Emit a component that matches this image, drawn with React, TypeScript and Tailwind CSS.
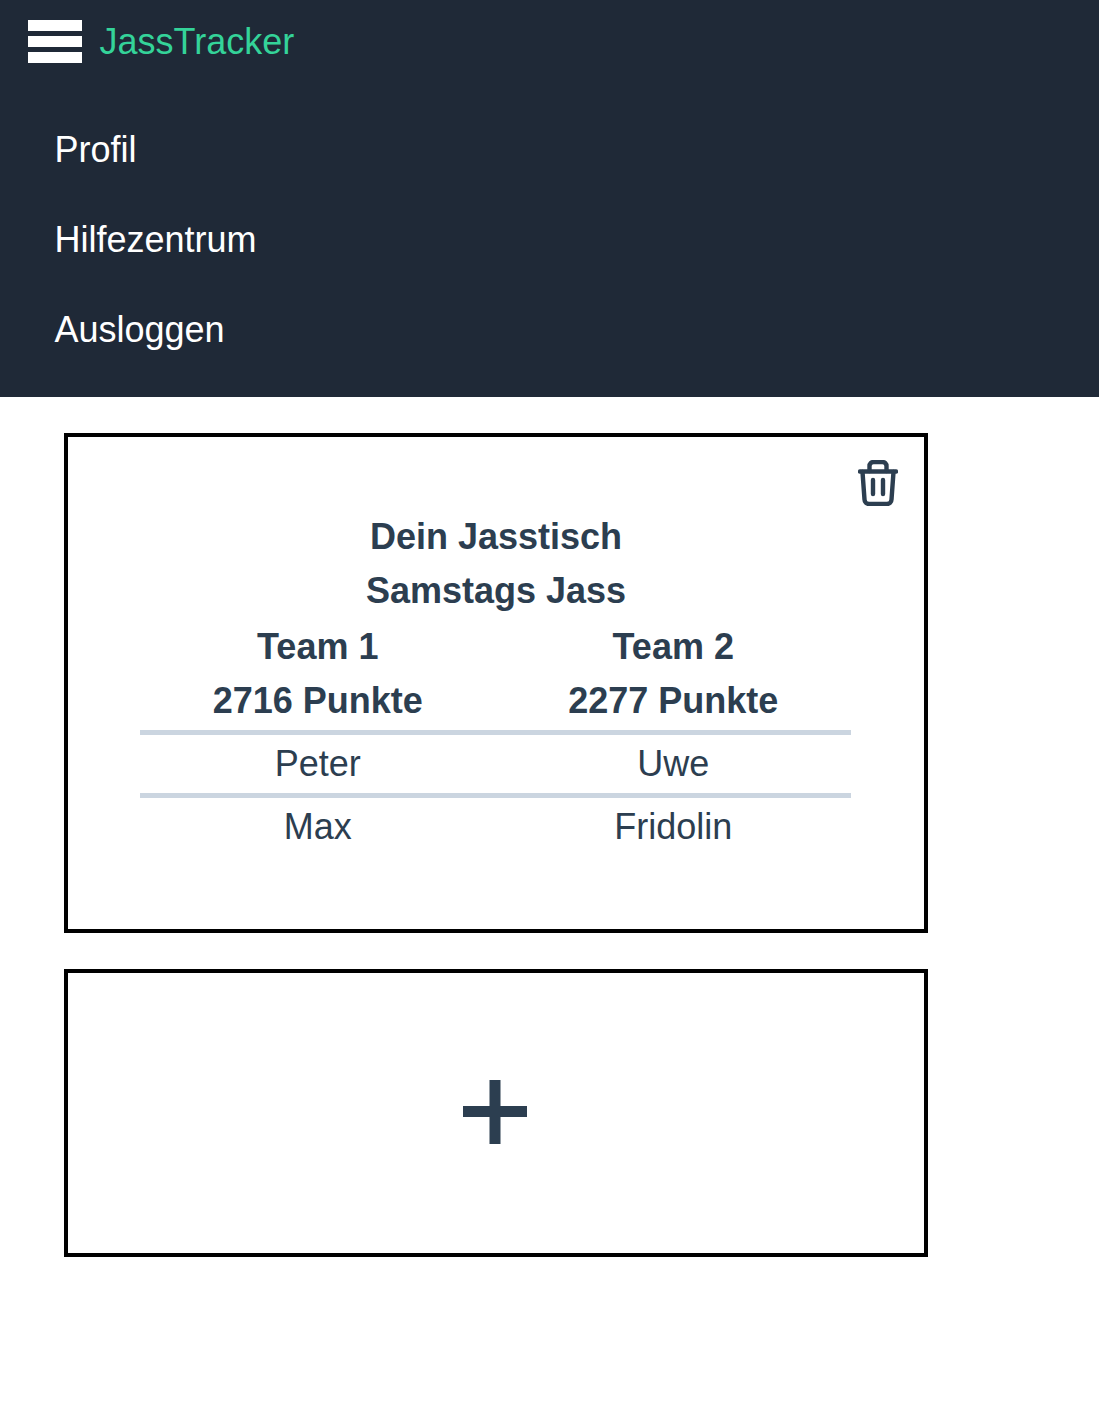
const navLinks = ["Profil", "Hilfezentrum", "Ausloggen"];

const rows = [
  ["Peter", "Uwe"],
  ["Max", "Fridolin"],
];

function TrashIcon() {
  return (
    <svg width="40" height="46" viewBox="0 0 40 46" fill="none" stroke="currentColor" strokeWidth="4.4" strokeLinecap="round" strokeLinejoin="round">
      <path d="M2 11.5h36" />
      <path d="M11.5 11V6a4 4 0 014-4h9a4 4 0 014 4v5" />
      <path d="M4.5 12l2 27.5a4.5 4.5 0 004.5 4.5h18a4.5 4.5 0 004.5-4.5l2-27.5" />
      <path d="M15 20v14M25 20v14" />
    </svg>
  );
}

function PlusIcon() {
  return (
    <svg width="64" height="64" viewBox="0 0 64 64" fill="currentColor">
      <path d="M26.5 0h11v26h26.5v11H37.5v27h-11V37H0V26h26.5z" />
    </svg>
  );
}

export default function App() {
  return (
    <div className="min-h-[1416px] bg-white font-['Liberation_Sans',Arial,sans-serif] text-[36px] leading-[54px] text-[#2c3e50]">
      {/* Header with open menu */}
      <header className="h-[397px] bg-[#1f2937] text-white">
        <div className="flex h-[84px] items-center pb-[1px] pl-[28px]">
          <div className="flex w-[54px] flex-col gap-[5.4px]">
            <span className="h-[10.8px] bg-white" />
            <span className="h-[10.8px] bg-white" />
            <span className="h-[10.8px] bg-white" />
          </div>
          <span className="ml-[17.5px] text-[#34d399]">JassTracker</span>
        </div>
        <nav className="flex flex-col gap-[36px] pl-[54.5px] pt-[39px]">
          {navLinks.map((link) => (
            <a key={link}>{link}</a>
          ))}
        </nav>
      </header>

      <main className="flex w-[992px] flex-col gap-[36px] pl-[64px] pr-[64px] pt-[36px]">
        {/* Table card */}
        <section className="relative h-[500px] border-4 border-black pt-[73px]">
          <button className="absolute right-[26px] top-[23px]" aria-label="Löschen">
            <TrashIcon />
          </button>
          <div className="text-center font-bold">
            <h2>Dein Jasstisch</h2>
            <h3>Samstags Jass</h3>
          </div>
          <table className="ml-[72px] mt-[2px] w-[711px] table-fixed border-collapse text-center">
            <thead className="font-bold">
              <tr>
                <th className="pb-0 font-bold">Team 1</th>
                <th className="pb-0 font-bold">Team 2</th>
              </tr>
              <tr className="border-b-[5px] border-[#cbd5e0]">
                <th className="pb-[2px] font-bold">2716 Punkte</th>
                <th className="pb-[2px] font-bold">2277 Punkte</th>
              </tr>
            </thead>
            <tbody>
              {rows.map((row, i) => (
                <tr key={row[0]} className={i === 0 ? "border-b-[5px] border-[#cbd5e0]" : ""}>
                  {row.map((name) => (
                    <td key={name} className="py-[2px]">{name}</td>
                  ))}
                </tr>
              ))}
            </tbody>
          </table>
        </section>

        {/* Add table card */}
        <button className="flex h-[288px] items-center justify-center border-4 border-black pb-[2px] pr-[2px]" aria-label="Jasstisch hinzufügen">
          <PlusIcon />
        </button>
      </main>
    </div>
  );
}
